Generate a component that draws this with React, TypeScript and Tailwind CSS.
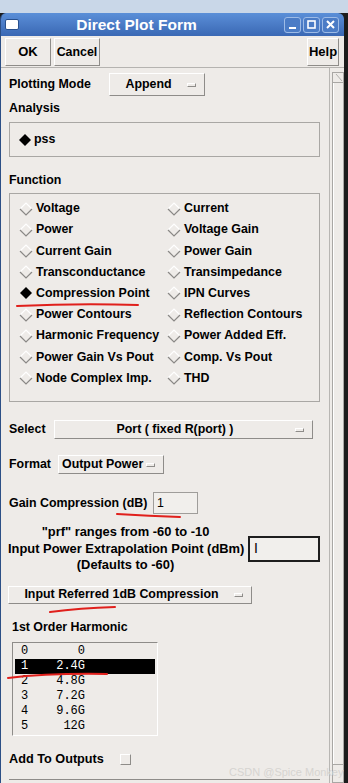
import React from "react";

const FONT = { fontFamily: '"Liberation Sans", Arial, sans-serif' };
const MONO = { fontFamily: '"Liberation Mono", "Courier New", monospace' };

const raised =
  "border border-t-white border-l-white border-b-[#8e8c89] border-r-[#8e8c89] bg-[#eeebe8]";

function Diamond({ on }: { on?: boolean }) {
  return (
    <svg width="14" height="14" viewBox="0 0 14 14" className="shrink-0">
      {on ? (
        <polygon points="7,1 13,7 7,13 1,7" fill="#000" />
      ) : (
        <>
          <polyline points="1,7 7,1 13,7" fill="none" stroke="#ffffff" strokeWidth="1.2" />
          <polyline points="1,7 7,13 13,7" fill="none" stroke="#8a8886" strokeWidth="1.2" />
        </>
      )}
    </svg>
  );
}

function Dropdown({ label, className }: { label: string; className: string }) {
  return (
    <div className={`${raised} flex items-center ${className}`}>
      <span className="flex-1 text-center">{label}</span>
      <span className="mr-[8px] h-[4px] w-[9px] border border-t-white border-l-white border-b-[#8e8c89] border-r-[#8e8c89]" />
    </div>
  );
}

const LEFT = [
  "Voltage",
  "Power",
  "Current Gain",
  "Transconductance",
  "Compression Point",
  "Power Contours",
  "Harmonic Frequency",
  "Power Gain Vs Pout",
  "Node Complex Imp.",
];
const RIGHT = [
  "Current",
  "Voltage Gain",
  "Power Gain",
  "Transimpedance",
  "IPN Curves",
  "Reflection Contours",
  "Power Added Eff.",
  "Comp. Vs Pout",
  "THD",
];

const HARMONICS = [
  ["0", "0"],
  ["1", "2.4G"],
  ["2", "4.8G"],
  ["3", "7.2G"],
  ["4", "9.6G"],
  ["5", "12G"],
];

export default function App() {
  return (
    <div
      className="relative flex h-[783px] w-[348px] flex-col overflow-hidden bg-[#1c1c1c] text-[12.4px] font-bold text-black"
      style={FONT}
    >
      <div className="h-[13px] shrink-0 bg-[#c9d7e8]" />
      <div className="flex w-[344px] flex-1 flex-col overflow-hidden rounded-t-[6px] border-l border-[#2c4f86]">
        {/* title bar */}
        <div className="relative flex h-[23px] shrink-0 items-center bg-gradient-to-b from-[#5b8fd8] to-[#3a68b4] px-[4px]">
          <div className="h-[11px] w-[14px] rounded-[2px] border border-[#28508e] bg-white" />
          <div className="flex-1 pr-[30px] text-center text-[15.5px] font-bold text-white">
            Direct Plot Form
          </div>
          <div className="flex gap-[2px] pr-[1px]">
            {["min", "max", "close"].map((k) => (
              <div
                key={k}
                className="flex h-[16px] w-[17px] items-center justify-center rounded-[3px] border border-[#9dbbe6] bg-[#4b7cc6]"
              >
                <svg width="11" height="11" viewBox="0 0 11 11">
                  {k === "min" && <rect x="2" y="8" width="7" height="2" fill="#fff" />}
                  {k === "max" && (
                    <rect x="2" y="2" width="7" height="7" fill="none" stroke="#fff" strokeWidth="1.6" />
                  )}
                  {k === "close" && (
                    <path d="M2 2 L9 9 M9 2 L2 9" stroke="#fff" strokeWidth="2" />
                  )}
                </svg>
              </div>
            ))}
          </div>
        </div>

        <div className="flex flex-1 flex-col bg-[#eeebe8]">
          {/* button row */}
          <div className="flex h-[31px] shrink-0 items-center px-[4px] pt-[1px]">
            <div className={`${raised} flex h-[28px] w-[46px] items-center justify-center text-[13px]`}>OK</div>
            <div className={`${raised} ml-[3px] flex h-[28px] w-[46px] items-center justify-center`}>Cancel</div>
            <div className="flex-1" />
            <div className={`${raised} mr-[1px] flex h-[28px] w-[32px] items-center justify-center text-[13px]`}>Help</div>
          </div>
          <div className="h-[1px] shrink-0 bg-[#b5b3b0]" />

          <div className="flex flex-1">
            {/* content */}
            <div className="flex w-[328px] flex-col pl-[8px] pr-[9px]">
              <div className="mt-[5px] flex h-[23px] items-center">
                <span className="w-[100px]">Plotting Mode</span>
                <Dropdown label="Append" className="h-[23px] w-[96px]" />
              </div>

              <div className="mt-[5px] h-[14px] leading-[14px]">Analysis</div>
              <div className="mt-[7px] flex h-[35px] items-center gap-[2px] border border-[#a9a7a4] px-[8px]">
                <Diamond on />
                <span>pss</span>
              </div>

              <div className="mt-[16px] h-[14px] leading-[14px]">Function</div>
              <div className="mt-[6px] flex h-[209px] border border-[#a9a7a4] pt-[4px]">
                <div className="flex w-[157px] flex-col pl-[9px]">
                  {LEFT.map((t, i) => (
                    <div key={t} className="flex h-[21.2px] items-center gap-[3px]">
                      <Diamond on={i === 4} />
                      <span className="whitespace-nowrap">{t}</span>
                    </div>
                  ))}
                </div>
                <div className="flex flex-col">
                  {RIGHT.map((t) => (
                    <div key={t} className="flex h-[21.2px] items-center gap-[3px]">
                      <Diamond />
                      <span className="whitespace-nowrap">{t}</span>
                    </div>
                  ))}
                </div>
              </div>

              <div className="mt-[18px] flex h-[19px] items-center">
                <span className="w-[45px]">Select</span>
                <Dropdown label="Port ( fixed R(port) )" className="h-[19px] w-[259px]" />
              </div>

              <div className="mt-[16px] flex h-[19px] items-center">
                <span className="w-[49px]">Format</span>
                <div className={`${raised} flex h-[19px] w-[106px] items-center pl-[3px]`}>
                  <span>Output Power</span>
                  <span className="ml-[3px] h-[4px] w-[9px] border border-t-white border-l-white border-b-[#8e8c89] border-r-[#8e8c89]" />
                </div>
              </div>

              <div className="mt-[18px] flex h-[22px] items-center">
                <span className="w-[144px]">Gain Compression (dB)</span>
                <div className="flex h-[22px] w-[45px] items-center border border-[#9f9d9a] bg-[#f1efec] pl-[3px] font-normal">
                  1
                </div>
              </div>

              <div className="mt-[10px] flex items-center">
                <div className="-ml-[1px] w-[235px] text-center text-[12.9px] leading-[16.5px]">
                  <div>"prf" ranges from -60 to -10</div>
                  <div className="whitespace-nowrap">Input Power Extrapolation Point (dBm)</div>
                  <div>(Defaults to -60)</div>
                </div>
                <div className="ml-[5px] flex h-[26px] w-[73px] items-center border-2 border-[#1e1e1e] bg-[#f1efec] pl-[4px] text-[14px] font-normal">
                  I
                </div>
              </div>

              <Dropdown label="Input Referred 1dB Compression" className="-ml-px mt-[12px] h-[18px] w-[244px]" />

              <div className="ml-[3px] mt-[16px] h-[14px] leading-[14px]">1st Order Harmonic</div>
              <div
                className="ml-[3px] mt-[8px] flex h-[94px] w-[146px] flex-col border border-t-[#8e8c89] border-l-[#8e8c89] border-b-white border-r-white px-[2px] pt-[1px] text-[12px] font-normal"
                style={MONO}
              >
                {HARMONICS.map(([i, v]) => (
                  <div
                    key={i}
                    className={`flex h-[15px] items-center ${i === "1" ? "bg-black text-white" : ""}`}
                  >
                    <span className="w-[26px] pl-[6px]">{i}</span>
                    <span className="w-[44px] text-right">{v}</span>
                  </div>
                ))}
              </div>

              <div className="mt-[17px] flex h-[14px] items-center">
                <span className="w-[111px] text-[12.7px]">Add To Outputs</span>
                <span className="h-[11px] w-[11px] border border-t-white border-l-white border-b-[#8e8c89] border-r-[#8e8c89]" />
              </div>
              <div className="flex-1" />
              <div className="mb-[3px] h-[1px] bg-[#8e8c89]" />
            </div>

            {/* scrollbar */}
            <div className="flex w-[16px] flex-col border-l border-[#b8b6b3] pl-[2px] pr-[1px] pt-[4px]">
              <div className="flex flex-1 flex-col border border-[#a9a7a4]">
                <div className="h-[10px] border-b border-[#a9a7a4]">
                  <svg width="11" height="9" viewBox="0 0 11 9">
                    <path d="M3 1 L9 8" stroke="#b0aeab" strokeWidth="1" />
                  </svg>
                </div>
                <div className="flex-1 border-l border-white" />
                <div className="h-[18px] border-t border-[#a9a7a4]" />
              </div>
            </div>
          </div>
        </div>
      </div>

      {/* hand drawn annotations */}
      <svg className="pointer-events-none absolute left-0 top-0" width="348" height="783">
        <path d="M17 306 Q80 303 138 305" stroke="#e0201c" strokeWidth="2" fill="none" strokeLinecap="round" />
        <path d="M117 514 Q150 516 180 517" stroke="#e0201c" strokeWidth="2" fill="none" strokeLinecap="round" />
        <path d="M50 612 Q80 608 115 607" stroke="#e0201c" strokeWidth="2" fill="none" strokeLinecap="round" />
        <path d="M8 678 Q50 673 107 674" stroke="#e0201c" strokeWidth="2" fill="none" strokeLinecap="round" />
      </svg>

      <div className="pointer-events-none absolute left-[229px] top-[764px] text-[11px] font-normal text-[#d6d4d1]">
        CSDN @Spice Monkey
      </div>
    </div>
  );
}
